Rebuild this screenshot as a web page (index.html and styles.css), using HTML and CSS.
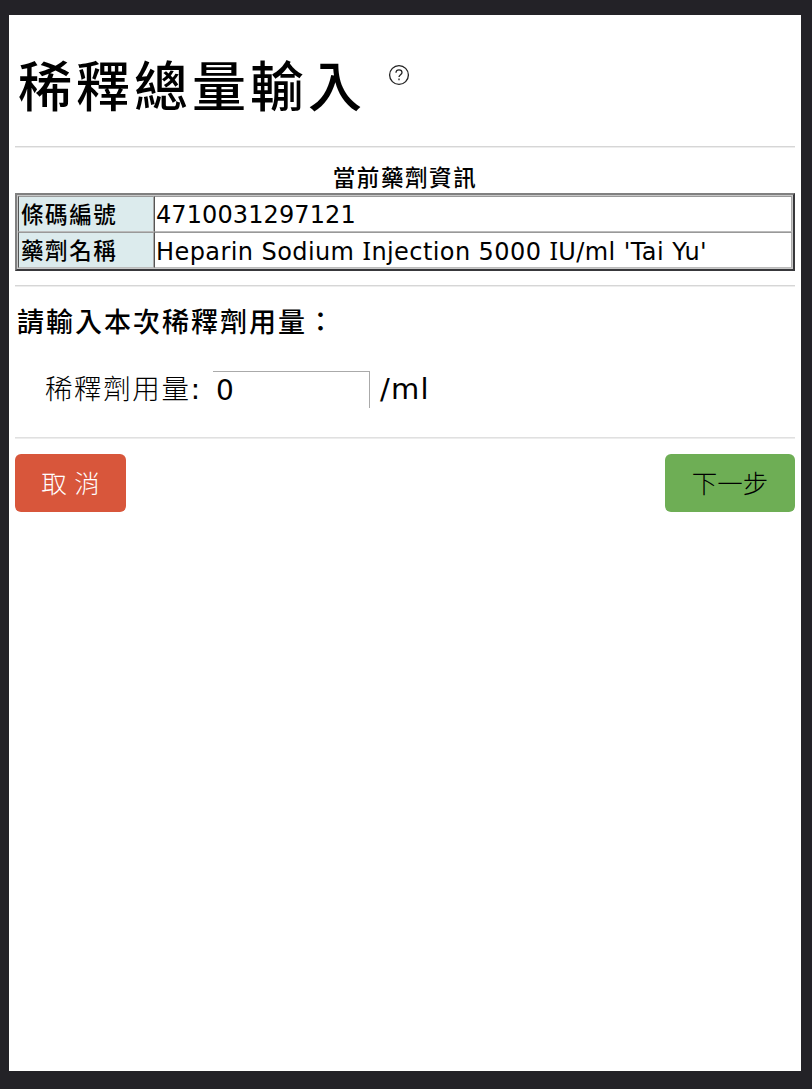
FILE: index.html
```html
<!DOCTYPE html>
<html lang="zh-Hant">
<head>
<meta charset="utf-8">
<title>稀釋總量輸入</title>
<link rel="stylesheet" href="styles.css">
</head>
<body>
<main class="page">
  <header class="head">
    <h1 class="title">稀釋總量輸入</h1>
    <svg class="help" viewBox="0 0 22 22" fill="none" stroke="#222" stroke-width="1.3"><circle cx="11" cy="11" r="9.4"/><path d="M8 8.8C8 6.9 9.2 5.8 11 5.8s3 1.1 3 2.7c0 2.2-3 2.3-3 4.6M11 14.6v1.6"/></svg>
  </header>
  <hr class="rule">
  <div class="caption">當前藥劑資訊</div>
  <div class="info">
    <div class="cell label">條碼編號</div><div class="cell code">4710031297121</div>
    <div class="cell label">藥劑名稱</div><div class="cell drug">Heparin Sodium <span class="cap">I</span>njection 5000 <span class="cap">I</span>U/ml 'Tai Yu'</div>
  </div>
  <hr class="rule">
  <h2 class="prompt">請輸入本次稀釋劑用量：</h2>
  <div class="field">
    <label class="name" for="amount">稀釋劑用量<span class="colon">:</span></label>
    <input class="amount" id="amount" value="0">
    <span class="unit">/ml</span>
  </div>
  <hr class="rule thick">
  <div class="actions">
    <button class="btn cancel">取 消</button>
    <button class="btn next">下一步</button>
  </div>
</main>
</body>
</html>
```
FILE: styles.css
```css
* { box-sizing: border-box; }
body {
  margin: 0;
  padding: 15px 11px 18px 9px;
  height: 1089px;
  background: #232227;
  color: #000;
  font-family: "DejaVu Sans", "Noto Sans CJK TC", sans-serif;
}
.page { height: 1056px; padding: 0 6px; background: #fff; }
.head { display: flex; height: 131px; padding: 29px 0 0 3px; }
.title {
  margin: 0;
  width: 370px;
  font: 500 54px/80px "Noto Sans CJK TC", sans-serif;
  letter-spacing: 4px;
  white-space: nowrap;
}
.help { width: 22px; height: 22px; margin-top: 20px; }
.rule { height: 2px; margin: 0; border: 0; background: #d6d6d6; border-bottom: 1px solid #ededed; }
.caption {
  height: 45px;
  padding-top: 10px;
  text-align: center;
  font: 500 22.5px/36px "Noto Sans CJK TC", sans-serif;
  letter-spacing: 1.6px;
}
.info {
  display: grid;
  grid-template-columns: 136px 1fr;
  grid-template-rows: 36px 36px;
  height: 78px;
  padding: 1px;
  margin-bottom: 14px;
  border: 2px solid;
  border-color: #808080 #38383b #38383b #808080;
  background: #c8c8c8;
}
.cell {
  border: 1px solid;
  border-color: #999 #aaa #bbb #555;
  background: #fff;
  padding-left: 1px;
  font-size: 24px;
  line-height: 35px;
  white-space: nowrap;
}
.code { line-height: 37px; letter-spacing: 0.1px; }
.drug { line-height: 38px; letter-spacing: 0.42px; }
.label { background: #dcebed; font: 500 22.5px/32px "Noto Sans CJK TC", sans-serif; letter-spacing: 1.6px; padding-left: 2px; }
.cap { font-family: "Noto Sans", sans-serif; font-size: 25px; line-height: 1; }
.prompt { margin: 0; height: 68px; padding: 0 2px; font: 500 27px/67px "Noto Sans CJK TC", sans-serif; letter-spacing: 2px; }
.field { display: flex; height: 82px; padding: 16px 0 0 30px; font-size: 29px; line-height: 37px; }
.name { width: 168px; font: 300 27.5px/33px "Noto Sans CJK TC", sans-serif; letter-spacing: 1.6px; white-space: nowrap; }
.colon { font: 400 29px/33px "DejaVu Sans", sans-serif; }
.amount {
  width: 157px;
  height: 37px;
  margin-right: 10px;
  padding: 0 3px;
  border: 1px solid #aaa;
  border-width: 1px 1px 0 0;
  background: #fff;
  font: 28px "DejaVu Sans", sans-serif;
}
.unit { letter-spacing: 1.3px; }
.thick { background: #e0e0e0; }
.actions { display: flex; justify-content: space-between; padding-top: 15px; }
.btn { height: 58px; padding: 0 0 4px; border: 0; border-radius: 6px; font: 300 25.5px "Noto Sans CJK TC", sans-serif; }
.cancel { width: 111px; background: #d8563b; color: #fff; word-spacing: 2px; }
.next { width: 130px; background: #6eae55; color: #000; }
```
